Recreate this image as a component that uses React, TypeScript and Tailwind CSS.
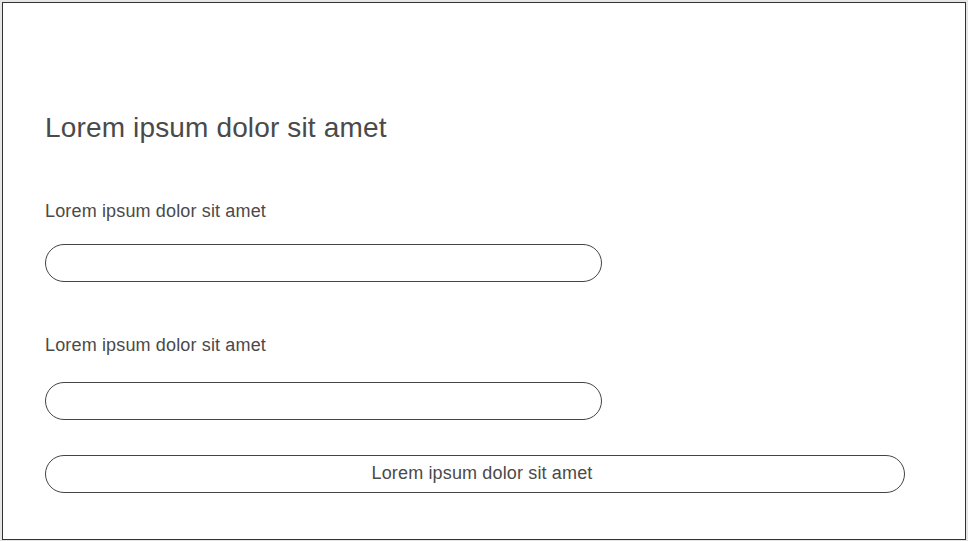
export default function App() {
  return (
    <div className="h-[541px] w-[968px] bg-[#e6e6e6] pl-[2px] pt-[2px] font-['Liberation_Sans',Arial,sans-serif] text-[#4a4a4a]">
      <div className="flex h-[538px] w-[964px] flex-col border border-[#333] bg-white pl-[42px] pt-[109px]">
        <h1 className="text-[28px] leading-[32px] tracking-[0.15px]">Lorem ipsum dolor sit amet</h1>

        <label className="mt-[57px] text-[18px] leading-[20px] tracking-[0.15px]">Lorem ipsum dolor sit amet</label>
        <div className="mt-[23px] h-[38px] w-[557px] rounded-full border border-[#444]" />

        <label className="mt-[53px] text-[18px] leading-[20px] tracking-[0.15px]">Lorem ipsum dolor sit amet</label>
        <div className="mt-[27px] h-[38px] w-[557px] rounded-full border border-[#444]" />

        <button className="mt-[35px] flex h-[38px] w-[860px] items-center justify-center rounded-full border border-[#444] pb-[2px] pl-[14px] text-[18px] tracking-[0.15px]">
          Lorem ipsum dolor sit amet
        </button>
      </div>
    </div>
  )
}
